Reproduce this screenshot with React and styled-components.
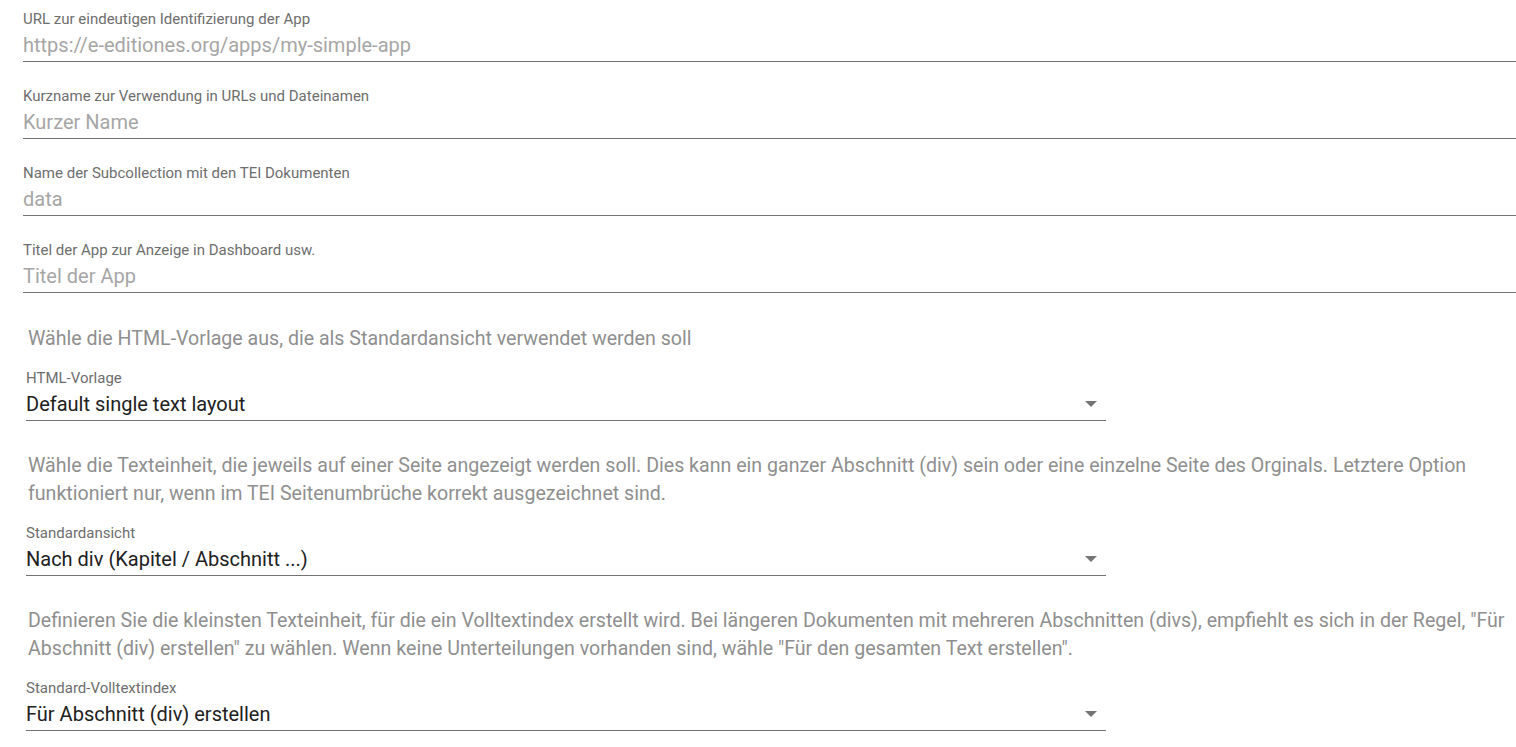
import React from 'react';
import styled, { createGlobalStyle } from 'styled-components';

const GlobalStyle = createGlobalStyle`
    body {
        margin: 0;
        background: #fff;
        font-family: Roboto, "Noto Sans", sans-serif;
        -webkit-font-smoothing: antialiased;
    }
`;

const Form = styled.div`
    padding: 9px 0 0 23px;
    display: flex;
    flex-direction: column;
`;

const Field = styled.label`
    display: flex;
    flex-direction: column;
    gap: 3px;
    padding-bottom: 3px;
    margin-bottom: 24px;
    border-bottom: 1px solid #737373;
`;

const Label = styled.span`
    font-size: 15px;
    line-height: 20px;
    color: #6e6e6e;
`;

const Input = styled.input`
    border: 0;
    outline: none;
    padding: 0;
    margin: 0;
    font: inherit;
    font-size: 20px;
    line-height: 26px;
    height: 26px;
    color: #212121;
    background: transparent;
    &::placeholder {
        color: #a6a6a6;
    }
`;

const Description = styled.p`
    margin: ${({ $first }) => ($first ? '8px' : '31px')} 0 0 5px;
    padding-right: 8px;
    font-size: 19.6px;
    line-height: 28px;
    color: #8f8f8f;
`;

const Select = styled.div`
    width: 1080px;
    margin: 15px 0 0 3px;
    display: flex;
    flex-direction: column;
    gap: 3px;
    padding-bottom: 3px;
    border-bottom: 1px solid #737373;
`;

const SelectRow = styled.div`
    display: flex;
    align-items: center;
    justify-content: space-between;
    font-size: 20px;
    line-height: 26px;
    color: #212121;
`;

const Caret = styled.span`
    width: 0;
    height: 0;
    margin-right: 9px;
    border-left: 6px solid transparent;
    border-right: 6px solid transparent;
    border-top: 6px solid #757575;
`;

const Dropdown = ({ label, value }) => (
    <Select>
        <Label>{label}</Label>
        <SelectRow>
            {value}
            <Caret />
        </SelectRow>
    </Select>
);

const fields = [
    ['URL zur eindeutigen Identifizierung der App', 'https://e-editiones.org/apps/my-simple-app'],
    ['Kurzname zur Verwendung in URLs und Dateinamen', 'Kurzer Name'],
    ['Name der Subcollection mit den TEI Dokumenten', 'data'],
    ['Titel der App zur Anzeige in Dashboard usw.', 'Titel der App'],
];

const App = () => (
    <>
        <GlobalStyle />
        <Form>
            {fields.map(([label, placeholder]) => (
                <Field key={label}>
                    <Label>{label}</Label>
                    <Input placeholder={placeholder} />
                </Field>
            ))}
            <Description $first>
                Wähle die HTML-Vorlage aus, die als Standardansicht verwendet werden soll
            </Description>
            <Dropdown label="HTML-Vorlage" value="Default single text layout" />
            <Description>
                Wähle die Texteinheit, die jeweils auf einer Seite angezeigt werden soll. Dies kann ein
                ganzer Abschnitt (div) sein oder eine einzelne Seite des Orginals. Letztere Option
                funktioniert nur, wenn im TEI Seitenumbrüche korrekt ausgezeichnet sind.
            </Description>
            <Dropdown label="Standardansicht" value="Nach div (Kapitel / Abschnitt ...)" />
            <Description>
                Definieren Sie die kleinsten Texteinheit, für die ein Volltextindex erstellt wird. Bei
                längeren Dokumenten mit mehreren Abschnitten (divs), empfiehlt es sich in der Regel,
                "Für Abschnitt (div) erstellen" zu wählen. Wenn keine Unterteilungen vorhanden sind,
                wähle "Für den gesamten Text erstellen".
            </Description>
            <Dropdown label="Standard-Volltextindex" value="Für Abschnitt (div) erstellen" />
        </Form>
    </>
);

export default App;
